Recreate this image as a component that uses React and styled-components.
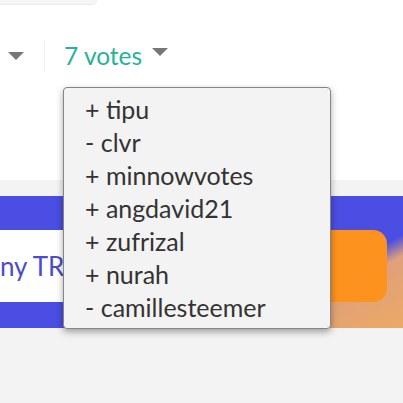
import React from "react";
import styled, { createGlobalStyle } from "styled-components";

const GlobalStyle = createGlobalStyle`
  html, body { margin: 0; padding: 0; }
  body {
    background: #f3f3f3;
    font-family: Lato, "Noto Sans", sans-serif;
    overflow: hidden;
  }
`;

const Page = styled.div`
  width: 403px;
  height: 403px;
  display: flex;
  flex-direction: column;
  background: #f3f3f3;
  overflow: hidden;
`;

const Card = styled.div`
  height: 180px;
  background: #ffffff;
  display: flex;
  flex-direction: column;
`;

const TopBox = styled.div`
  width: 96px;
  height: 4px;
  background: #f5f5f5;
  border-right: 1px solid #ebebeb;
  border-bottom: 1px solid #ebebeb;
  border-bottom-right-radius: 8px;
`;

const VoteRow = styled.div`
  margin-top: 35px;
  height: 32px;
  display: flex;
  align-items: center;
`;

const Caret = styled.span`
  width: 0;
  height: 0;
  border-left: ${(p) => p.$size}px solid transparent;
  border-right: ${(p) => p.$size}px solid transparent;
  border-top: ${(p) => p.$size}px solid #777;
  margin-left: ${(p) => p.$ml}px;
  align-self: ${(p) => (p.$top ? "flex-start" : "center")};
  margin-top: ${(p) => (p.$top ? "8px" : "0")};
`;

const Divider = styled.span`
  width: 1px;
  height: 32px;
  background: #f0f0f0;
  margin-left: 20px;
`;

const VoteLink = styled.span`
  position: relative;
  margin-left: 19px;
  font-size: 24.5px;
  line-height: 32px;
  color: #26b39b;
`;

const Dropdown = styled.ul`
  position: absolute;
  left: -1px;
  top: 47px;
  width: 266px;
  margin: 0;
  padding: 5px 0 4px;
  list-style: none;
  background: #f3f3f3;
  border: 1px solid #858585;
  border-radius: 4px;
  box-shadow: 0 3px 7px rgba(0, 0, 0, 0.35);
  z-index: 5;
`;

const Item = styled.li`
  padding-left: 21px;
  font-size: 25px;
  line-height: 33px;
  color: #333;
  white-space: nowrap;
`;

const Gap = styled.div`
  height: 16px;
  background: #f3f3f3;
`;

const Banner = styled.div`
  height: 132px;
  display: flex;
  align-items: flex-start;
  padding-top: 34px;
  box-sizing: border-box;
  overflow: hidden;
  background: linear-gradient(152deg, #4a4ee2 73%, #dfa07c 79%, #eca963 100%);
`;

const SearchBox = styled.div`
  flex: 1;
  height: 72px;
  background: #ffffff;
  display: flex;
  align-items: center;
  overflow: hidden;
`;

const SearchText = styled.span`
  font-size: 26px;
  color: #4b4dc9;
  white-space: nowrap;
  margin-left: -13px;
`;

const GoButton = styled.div`
  width: 70px;
  height: 72px;
  margin-right: 16px;
  background: #fd921f;
  border-radius: 0 14px 14px 0;
`;

const voters = [
  "+ tipu",
  "- clvr",
  "+ minnowvotes",
  "+ angdavid21",
  "+ zufrizal",
  "+ nurah",
  "- camillesteemer",
];

export default function App() {
  return (
    <>
      <GlobalStyle />
      <Page>
        <Card>
          <TopBox />
          <VoteRow>
            <Caret $size={8} $ml={8} />
            <Divider />
            <VoteLink>
              7 votes
              <Dropdown>
                {voters.map((v) => (
                  <Item key={v}>{v}</Item>
                ))}
              </Dropdown>
            </VoteLink>
            <Caret $size={8} $ml={10} $top />
          </VoteRow>
        </Card>
        <Gap />
        <Banner>
          <SearchBox>
            <SearchText>any TRX</SearchText>
          </SearchBox>
          <GoButton />
        </Banner>
      </Page>
    </>
  );
}
